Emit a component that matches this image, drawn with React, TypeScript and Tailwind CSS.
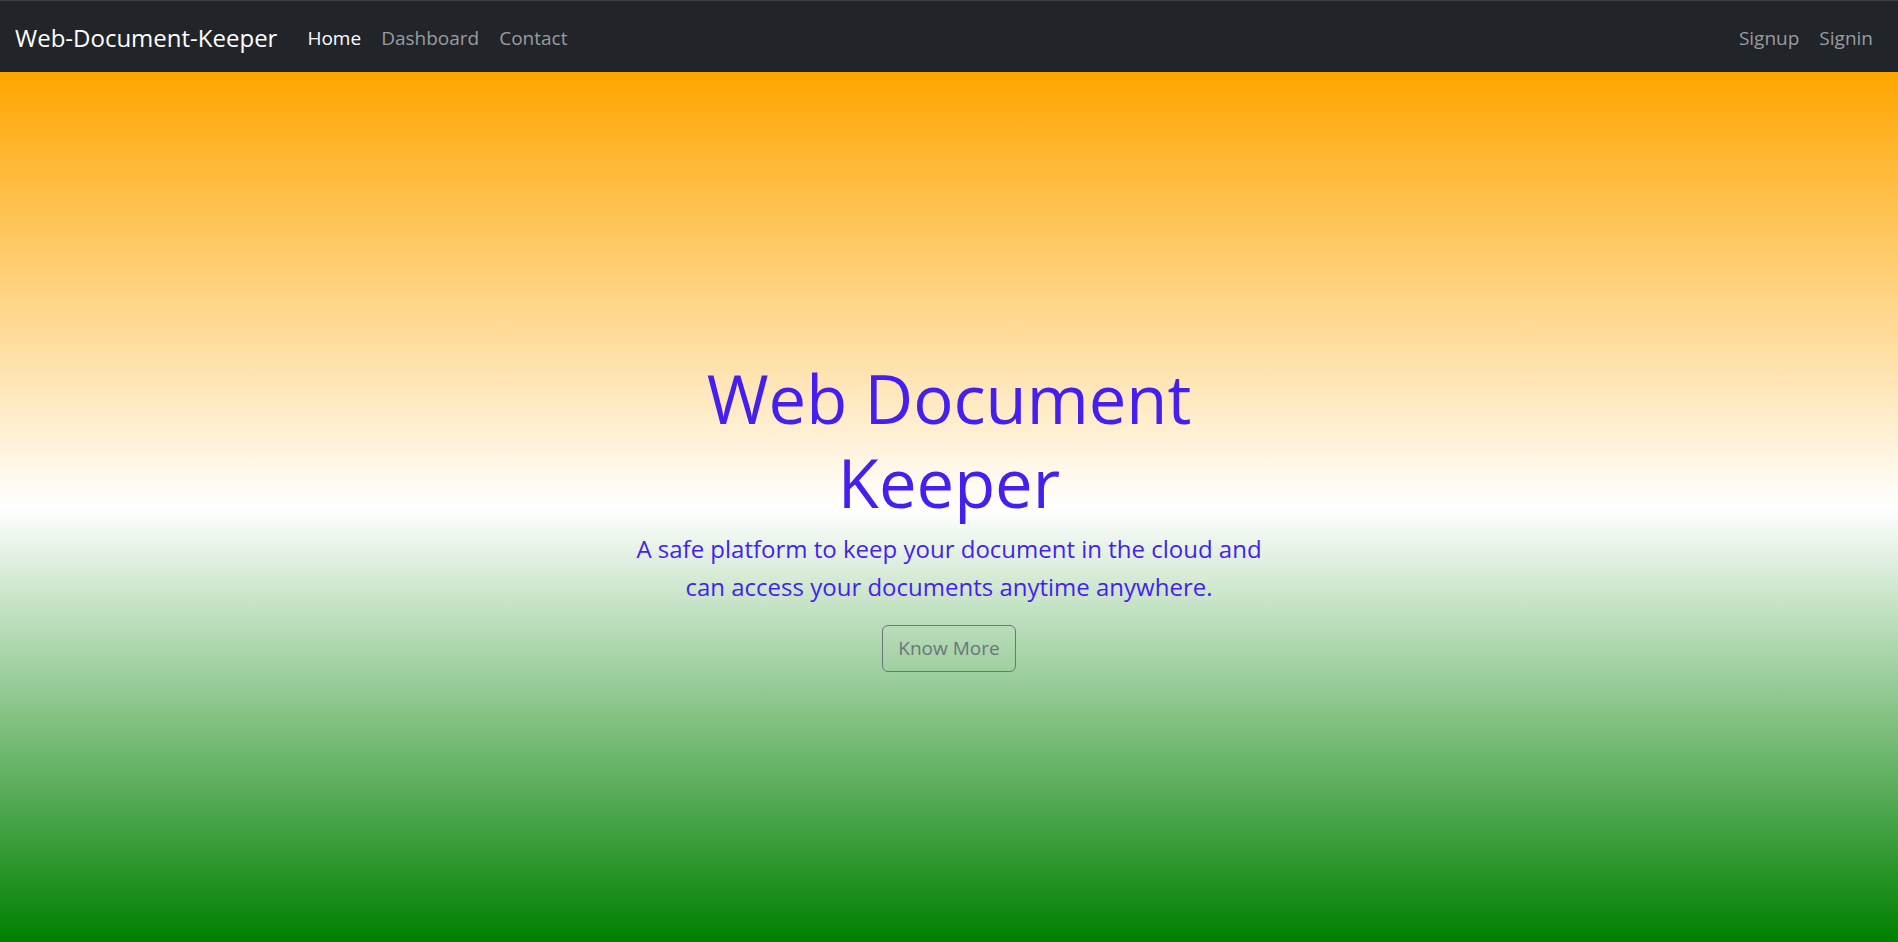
export default function App() {
  return (
    <div className="flex min-h-screen flex-col font-['Open_Sans',sans-serif]">
      {/* top navbar */}
      <nav className="flex h-[72px] items-center justify-between border-t border-[#3b3e43] bg-[#212529] px-[15px] pt-[3px]">
        <div className="flex items-center">
          <a href="#" className="mr-[20px] text-[24px] text-white">Web-Document-Keeper</a>
          <a href="#" className="px-[10px] text-[19px] text-white">Home</a>
          <a href="#" className="px-[10px] text-[19px] text-[#9a9c9e]">Dashboard</a>
          <a href="#" className="px-[10px] text-[19px] text-[#9a9c9e]">Contact</a>
        </div>
        <div className="flex items-center">
          <a href="#" className="px-[10px] text-[19px] text-[#9a9c9e]">Signup</a>
          <a href="#" className="px-[10px] text-[19px] text-[#9a9c9e]">Signin</a>
        </div>
      </nav>

      {/* hero */}
      <section className="flex h-[870px] flex-col items-center justify-center bg-[linear-gradient(#ffa500,#ffffff,#008000)] pt-[10px] text-center">
        <h1 className="pt-[4px] text-[67px] leading-[84px] text-[#451ff0]">
          Web Document
          <br />
          Keeper
        </h1>
        <p className="mt-[6px] text-[24px] leading-[38px] text-[#451ff0]">
          A safe platform to keep your document in the cloud and
          <br />
          can access your documents anytime anywhere.
        </p>
        <button className="mt-[19px] rounded-[6px] border border-[#6c757d] px-[15px] py-[8px] text-[19px] leading-[1.5] text-[#6c757d]">
          Know More
        </button>
      </section>
    </div>
  );
}
